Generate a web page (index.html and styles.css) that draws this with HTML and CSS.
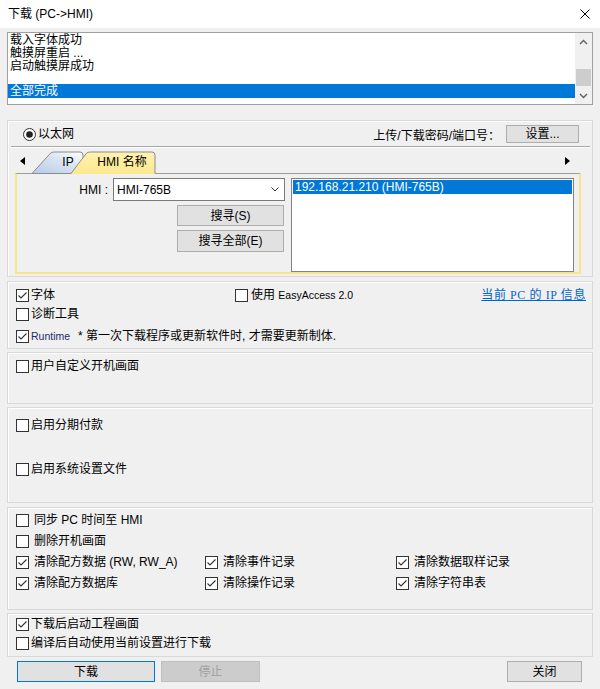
FILE: index.html
```html
<!DOCTYPE html>
<html>
<head>
<meta charset="utf-8">
<link rel="stylesheet" href="styles.css">
</head>
<body>
<div class="titlebar">
  <span class="title">下载 (PC-&gt;HMI)</span>
  <svg class="close" viewBox="0 0 10 10"><path d="M0.5 0.5L9.5 9.5M9.5 0.5L0.5 9.5"/></svg>
</div>
<div class="main">
  <div class="log">
    <div class="log-lines">
      <div class="ln">载入字体成功</div>
      <div class="ln">触摸屏重启 ...</div>
      <div class="ln">启动触摸屏成功</div>
      <div class="ln blank"></div>
      <div class="ln sel">全部完成</div>
    </div>
    <div class="vscroll">
      <div class="sarrow"><svg viewBox="0 0 9 6"><path d="M1 5L4.5 1.5L8 5"/></svg></div>
      <div class="track"><div class="thumb"></div></div>
      <div class="sarrow"><svg viewBox="0 0 9 6"><path d="M1 1L4.5 4.5L8 1"/></svg></div>
    </div>
  </div>

  <div class="group eth">
    <div class="eth-row">
      <label class="rb"><svg class="radio" viewBox="0 0 13 13"><circle class="ring" cx="6.5" cy="6.5" r="6"/><circle class="dot" cx="6.5" cy="6.5" r="3.3"/></svg><span>以太网</span></label>
      <div class="eth-right">
        <span>上传/下载密码/端口号：</span>
        <button class="btn setbtn">设置...</button>
      </div>
    </div>
    <div class="sep"></div>
    <div class="tabstrip">
      <svg class="arrow" viewBox="0 0 5 8"><path d="M5 0L0 4L5 8Z"/></svg>
      <svg class="tabs" width="130" height="26" viewBox="0 0 130 26">
        <defs>
          <linearGradient id="gip" x1="0" y1="1" x2="1" y2="0">
            <stop offset="0" stop-color="#b6cbe6"/>
            <stop offset="0.55" stop-color="#d7e3f2"/>
            <stop offset="1" stop-color="#ffffff"/>
          </linearGradient>
          <linearGradient id="ghmi" x1="0" y1="0" x2="0" y2="1">
            <stop offset="0" stop-color="#fff2b0"/>
            <stop offset="1" stop-color="#fce88e"/>
          </linearGradient>
        </defs>
        <path class="tab-ip" d="M2 25.5L20.5 5.2Q22 4 24.5 4L50 4Q53 4 53 7L53 25.5Z"/>
        <text class="tabtxt" x="38" y="18" text-anchor="middle">IP</text>
        <path class="tab-hmi-fill" d="M41 26L56.5 5.2Q58 4 60.5 4L122 4Q125 4 125 7L125 26Z"/>
        <path class="tab-hmi-line" d="M41 25.5L56.5 5.2Q58 4 60.5 4L122 4Q125 4 125 7L125 25.5"/>
        <text class="tabtxt" x="92" y="18" text-anchor="middle">HMI 名称</text>
      </svg>
      <svg class="arrow arrow-r" viewBox="0 0 5 8"><path d="M0 0L5 4L0 8Z"/></svg>
    </div>
    <div class="panel">
      <div class="pleft">
        <div class="hmirow">
          <span class="lbl">HMI :</span>
          <div class="combo"><span>HMI-765B</span><svg viewBox="0 0 8 5"><path d="M0.5 0.5L4 4L7.5 0.5"/></svg></div>
        </div>
        <button class="btn sbtn">搜寻(S)</button>
        <button class="btn sbtn sbtn2">搜寻全部(E)</button>
      </div>
      <div class="hmilist"><div class="item">192.168.21.210 (HMI-765B)</div></div>
    </div>
  </div>

  <div class="group g2">
    <div class="row r1">
      <label class="cb w219"><svg class="box" viewBox="0 0 13 13"><rect x=".5" y=".5" width="12" height="12"/><path d="M2.5 6.5L5 9L10.5 3.5"/></svg><span>字体</span></label>
      <label class="cb"><svg class="box" viewBox="0 0 13 13"><rect x=".5" y=".5" width="12" height="12"/></svg><span class="gap1">使用 <span class="lat">EasyAccess 2.0</span></span></label>
      <a class="link">当前 PC 的 IP 信息</a>
    </div>
    <div class="row r2">
      <label class="cb"><svg class="box" viewBox="0 0 13 13"><rect x=".5" y=".5" width="12" height="12"/></svg><span>诊断工具</span></label>
    </div>
    <div class="row r3">
      <label class="cb"><svg class="box" viewBox="0 0 13 13"><rect x=".5" y=".5" width="12" height="12"/><path d="M2.5 6.5L5 9L10.5 3.5"/></svg><span class="rt">Runtime</span></label>
      <span class="note">* 第一次下载程序或更新软件时, 才需要更新制体.</span>
    </div>
  </div>

  <div class="group g3">
    <label class="cb"><svg class="box" viewBox="0 0 13 13"><rect x=".5" y=".5" width="12" height="12"/></svg><span>用户自定义开机画面</span></label>
  </div>

  <div class="group g4">
    <label class="cb"><svg class="box" viewBox="0 0 13 13"><rect x=".5" y=".5" width="12" height="12"/></svg><span>启用分期付款</span></label>
    <label class="cb r2b"><svg class="box" viewBox="0 0 13 13"><rect x=".5" y=".5" width="12" height="12"/></svg><span>启用系统设置文件</span></label>
  </div>

  <div class="group g5">
    <div class="g5row full"><label class="cb cb5"><svg class="box" viewBox="0 0 13 13"><rect x=".5" y=".5" width="12" height="12"/></svg><span>同步 PC 时间至 HMI</span></label></div>
    <div class="g5row full"><label class="cb cb5"><svg class="box" viewBox="0 0 13 13"><rect x=".5" y=".5" width="12" height="12"/></svg><span>删除开机画面</span></label></div>
    <div class="g5row">
      <label class="cb cb5"><svg class="box" viewBox="0 0 13 13"><rect x=".5" y=".5" width="12" height="12"/><path d="M2.5 6.5L5 9L10.5 3.5"/></svg><span>清除配方数据 (RW, RW_A)</span></label>
      <label class="cb cb5"><svg class="box" viewBox="0 0 13 13"><rect x=".5" y=".5" width="12" height="12"/><path d="M2.5 6.5L5 9L10.5 3.5"/></svg><span>清除事件记录</span></label>
      <label class="cb cb5"><svg class="box" viewBox="0 0 13 13"><rect x=".5" y=".5" width="12" height="12"/><path d="M2.5 6.5L5 9L10.5 3.5"/></svg><span>清除数据取样记录</span></label>
    </div>
    <div class="g5row last">
      <label class="cb cb5"><svg class="box" viewBox="0 0 13 13"><rect x=".5" y=".5" width="12" height="12"/><path d="M2.5 6.5L5 9L10.5 3.5"/></svg><span>清除配方数据库</span></label>
      <label class="cb cb5"><svg class="box" viewBox="0 0 13 13"><rect x=".5" y=".5" width="12" height="12"/><path d="M2.5 6.5L5 9L10.5 3.5"/></svg><span>清除操作记录</span></label>
      <label class="cb cb5"><svg class="box" viewBox="0 0 13 13"><rect x=".5" y=".5" width="12" height="12"/><path d="M2.5 6.5L5 9L10.5 3.5"/></svg><span>清除字符串表</span></label>
    </div>
  </div>

  <div class="group g6">
    <label class="cb"><svg class="box" viewBox="0 0 13 13"><rect x=".5" y=".5" width="12" height="12"/><path d="M2.5 6.5L5 9L10.5 3.5"/></svg><span>下载后启动工程画面</span></label>
    <label class="cb r2c"><svg class="box" viewBox="0 0 13 13"><rect x=".5" y=".5" width="12" height="12"/></svg><span>编译后自动使用当前设置进行下载</span></label>
  </div>

  <div class="btnrow">
    <button class="btn b-dl">下载</button>
    <button class="btn b-stop">停止</button>
    <button class="btn b-close">关闭</button>
  </div>
</div>
</body>
</html>
```

FILE: styles.css
```css
* { box-sizing: border-box; }
html, body { margin: 0; padding: 0; }
body {
  width: 600px;
  height: 689px;
  overflow: hidden;
  background: #f0f0f0;
  font-family: "Liberation Sans", "Noto Sans CJK SC", sans-serif;
  font-size: 12px;
  color: #000;
}

.titlebar {
  height: 28px;
  background: #fff;
  display: flex;
  align-items: center;
  justify-content: space-between;
  padding: 0 10px 0 8px;
}
.title { font-size: 12px; line-height: 14px; }
.close { width: 10px; height: 10px; margin-top: -1px; }
.close path { stroke: #000; stroke-width: 1; fill: none; }

.main { padding: 0 7px; display: flex; flex-direction: column; }

.log {
  margin-top: 4px;
  height: 73px;
  border: 1px solid #a0a0a0;
  background: #fff;
  display: flex;
}
.log-lines { flex: 1; padding-top: 1px; }
.ln { height: 13px; line-height: 13px; padding-left: 2px; white-space: nowrap; }
.ln.blank { height: 11px; }
.ln.sel { height: 14px; line-height: 14px; background: #0078d7; color: #fff; }

.vscroll { width: 17px; background: #f0f0f0; display: flex; flex-direction: column; }
.sarrow { height: 17px; display: flex; align-items: center; justify-content: center; }
.sarrow svg { width: 9px; height: 6px; }
.sarrow path { fill: none; stroke: #606060; stroke-width: 1.4; }
.track { flex: 1; padding-top: 19px; }
.thumb { height: 17px; margin: 0 1px; background: #cdcdcd; }

.group {
  border: 1px solid #d9d9d9;
  box-shadow: inset 1px 1px 0 #fff;
}

.btn {
  font-family: "Liberation Sans", "Noto Sans CJK SC", sans-serif;
  font-size: 12px;
  color: #000;
  background: #e1e1e1;
  border: 1px solid #adadad;
  padding: 0;
  margin: 0;
  line-height: 1;
}

/* Ethernet group */
.eth { margin-top: 15px; height: 157px; display: flex; flex-direction: column; }
.eth-row {
  margin-top: 4px;
  height: 18px;
  display: flex;
  align-items: center;
  justify-content: space-between;
  padding: 0 13px 0 15px;
}
.rb { display: flex; align-items: center; gap: 2px; line-height: 13px; }
.radio { width: 13px; height: 13px; }
.radio .ring { fill: #fff; stroke: #333; stroke-width: 1; }
.radio .dot { fill: #222; }
.eth-right { display: flex; align-items: center; gap: 6px; }
.setbtn { width: 73px; height: 18px; }

.sep {
  margin: 3px 2px 0 3px;
  height: 2px;
  border-top: 1px solid #a8a8a8;
  border-bottom: 1px solid #fff;
}

.tabstrip {
  height: 25px;
  display: flex;
  align-items: center;
  padding-left: 12px;
  position: relative;
  z-index: 2;
}
.arrow { width: 5px; height: 8px; margin-top: 1px; }
.arrow path { fill: #000; }
.tabs { align-self: flex-start; margin-left: 5px; overflow: visible; }
.arrow-r { margin-left: auto; margin-right: 22px; }
.tab-ip { fill: url(#gip); stroke: #8c8c8c; stroke-width: 1; }
.tab-hmi-fill { fill: url(#ghmi); }
.tab-hmi-line { fill: none; stroke: #8c8c8c; stroke-width: 1; }
.tabtxt { font-family: "Liberation Sans", "Noto Sans CJK SC", sans-serif; font-size: 12px; fill: #000; }

.panel {
  margin: 0 11px 0 7px;
  height: 101px;
  border: 2px solid #f8e48c;
  border-top: 1px solid #9c9c9c;
  display: flex;
  padding: 4px 5px 0 0;
  gap: 6px;
}
.pleft { width: 268px; display: flex; flex-direction: column; align-items: flex-end; }
.hmirow { display: flex; align-items: center; gap: 5px; }
.lbl { line-height: 14px; }
.combo {
  width: 172px;
  height: 23px;
  background: #fff;
  border: 1px solid #7a7a7a;
  display: flex;
  align-items: center;
  justify-content: space-between;
  padding: 0 5px 0 3px;
}
.combo svg { width: 8px; height: 5px; }
.combo path { fill: none; stroke: #333; stroke-width: 1; }
.sbtn { width: 107px; height: 21px; margin-top: 4px; margin-right: 1px; }
.sbtn2 { height: 22px; }
.hmilist {
  flex: 1;
  height: 94px;
  background: #fff;
  border: 1px solid #828282;
  padding: 1px;
}
.item {
  height: 14px;
  line-height: 14px;
  background: #0078d7;
  color: #fff;
  padding-left: 2px;
  white-space: nowrap;
}

/* checkboxes */
.cb { display: flex; align-items: center; gap: 2px; line-height: 13px; height: 13px; white-space: nowrap; }
.box { width: 13px; height: 13px; flex: none; }
.box rect { fill: #fff; stroke: #333; stroke-width: 1; }
.box path { fill: none; stroke: #333; stroke-width: 1.1; }
.cb5 { gap: 5px; }

.g2 { margin-top: 4px; height: 68px; padding: 7px 6px 0 8px; }
.row { display: flex; align-items: center; height: 13px; }
.r2 { margin-top: 6px; }
.r3 { margin-top: 9px; }
.w219 { width: 219px; }
.gap1 { padding-left: 1px; }
.lat { font-size: 10.5px; }
.link {
  margin-left: auto;
  color: #0066cc;
  text-decoration: underline;
  font-family: "Liberation Serif", "Noto Sans CJK SC", serif;
  font-size: 12px;
  letter-spacing: 0.6px;
  line-height: 13px;
}
.rt { font-size: 10.5px; color: #1e2a6e; }
.note { margin-left: 8px; line-height: 13px; white-space: nowrap; }

.g3 { margin-top: 3px; height: 52px; padding: 7px 8px 0 8px; }
.g4 { margin-top: 3px; height: 96px; padding: 11px 8px 0 8px; }
.r2b { margin-top: 31px; }

.g5 { margin-top: 4px; height: 103px; padding: 2px 8px 0 8px; }
.g5row {
  height: 21px;
  display: grid;
  grid-template-columns: 189px 191px 1fr;
  align-items: center;
}
.g5row.last { height: 20px; }
.g5row.full { display: flex; }

.g6 { margin-top: 3px; height: 44px; padding: 4px 8px 0 8px; }
.r2c { margin-top: 6px; }

.btnrow {
  margin-top: 4px;
  height: 21px;
  display: flex;
  padding: 0 11px 0 10px;
}
.b-dl { width: 138px; height: 21px; border-color: #0078d7; }
.b-stop { width: 99px; height: 21px; margin-left: 6px; background: #cccccc; border-color: #bfbfbf; color: #a0a0a0; }
.b-close { width: 75px; height: 21px; margin-left: auto; }
```
